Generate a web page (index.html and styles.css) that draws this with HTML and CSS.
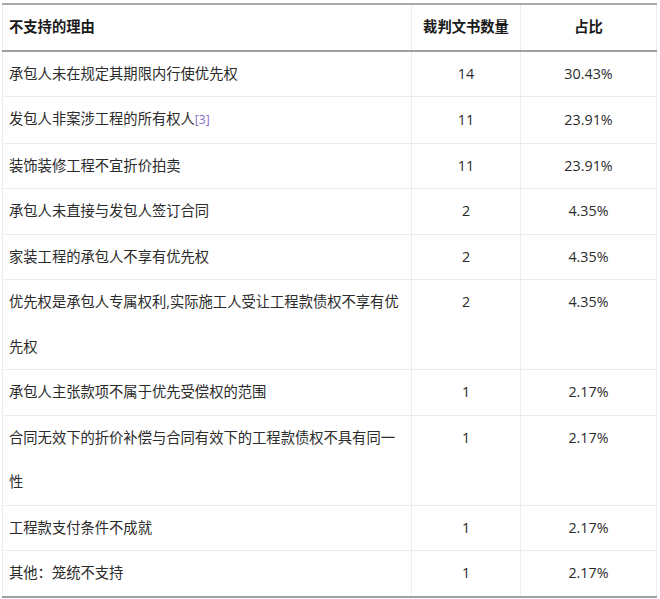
FILE: index.html
```html
<!DOCTYPE html>
<html lang="zh">
<head>
<meta charset="utf-8">
<link rel="stylesheet" href="styles.css">
</head>
<body>
<table class="stats">
  <colgroup>
    <col class="c-reason">
    <col class="c-count">
    <col class="c-ratio">
  </colgroup>
  <thead>
    <tr><th class="left">不支持的理由</th><th>裁判文书数量</th><th>占比</th></tr>
  </thead>
  <tbody>
    <tr><td class="left">承包人未在规定其期限内行使优先权</td><td>14</td><td>30.43%</td></tr>
    <tr><td class="left">发包人非案涉工程的所有权人<span class="ref">[3]</span></td><td>11</td><td>23.91%</td></tr>
    <tr><td class="left">装饰装修工程不宜折价拍卖</td><td>11</td><td>23.91%</td></tr>
    <tr><td class="left">承包人未直接与发包人签订合同</td><td>2</td><td>4.35%</td></tr>
    <tr><td class="left">家装工程的承包人不享有优先权</td><td>2</td><td>4.35%</td></tr>
    <tr><td class="left">优先权是承包人专属权利,实际施工人受让工程款债权不享有优先权</td><td class="top">2</td><td class="top">4.35%</td></tr>
    <tr><td class="left">承包人主张款项不属于优先受偿权的范围</td><td>1</td><td>2.17%</td></tr>
    <tr><td class="left">合同无效下的折价补偿与合同有效下的工程款债权不具有同一性</td><td class="top">1</td><td class="top">2.17%</td></tr>
    <tr><td class="left">工程款支付条件不成就</td><td>1</td><td>2.17%</td></tr>
    <tr><td class="left">其他：笼统不支持</td><td>1</td><td>2.17%</td></tr>
  </tbody>
</table>
</body>
</html>
```

FILE: styles.css
```css
html, body {
  margin: 0;
  padding: 0;
  background: #ffffff;
}
body {
  font-family: "Open Sans", "Noto Sans CJK SC", sans-serif;
  font-size: 14.3px;
  color: #2b2b2b;
}
.stats {
  margin: 3px 0 0 2px;
  width: 654px;
  border-collapse: collapse;
  table-layout: fixed;
  border-top: 2px solid #a8a8a8;
  border-bottom: 2px solid #a0a0a0;
  border-left: 1px solid #e6e6e6;
  border-right: 1px solid #e6e6e6;
}
.c-reason { width: 409px; }
.c-count { width: 109px; }
.c-ratio { width: 136px; }
.stats th,
.stats td {
  padding: 0 10px 0 6px;
  line-height: 44.5px;
  text-align: center;
  border-left: 1px solid #ececec;
  border-right: 1px solid #ececec;
  border-bottom: 1px solid #ececec;
  word-break: break-all;
}
.stats td:not(.left),
.stats th:not(.left) {
  padding: 0 4px;
}
.stats thead th {
  font-weight: bold;
  color: #1a1a1a;
  border-bottom: 2px solid #a0a0a0;
}
.stats .left {
  text-align: left;
}
.stats td.top {
  vertical-align: top;
}
.ref {
  font-size: 12px;
  color: #8468c4;
}
```
